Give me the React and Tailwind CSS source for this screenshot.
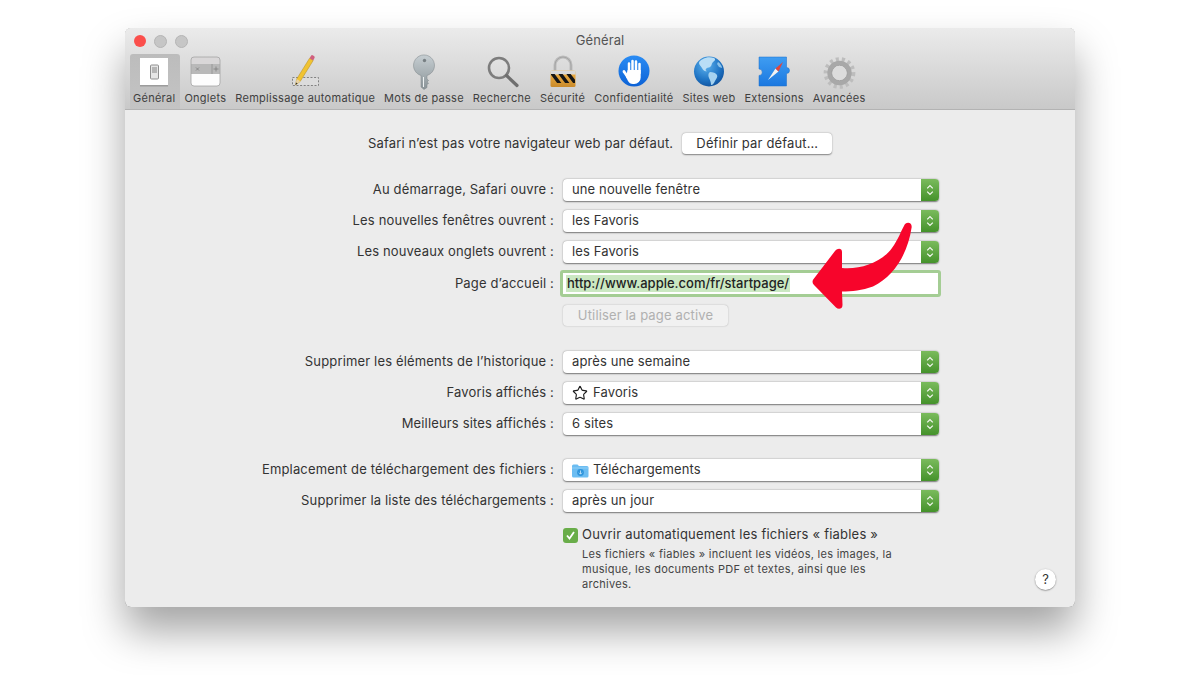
import React from "react";
import { Star } from "lucide-react";

const Svg = ({ children }) => (
  <svg width="40" height="36" viewBox="0 0 40 36" className="block">{children}</svg>
);

const icons = {
  general: (
    <Svg>
      <rect x="6" y="4" width="28" height="28" fill="#ffffff" />
      <rect x="6" y="31" width="28" height="1.5" fill="#9c9c9c" />
      <rect x="16.5" y="11" width="8" height="14" rx="1" fill="#e6e6e6" stroke="#8f8f8f" />
      <rect x="18" y="13" width="5" height="6" fill="#b5b5b5" />
    </Svg>
  ),
  tabs: (
    <Svg>
      <path d="M6 6a3 3 0 0 1 3-3h23a3 3 0 0 1 3 3v4H6z" fill="#d9d7d8" />
      <rect x="6" y="10" width="29" height="10" fill="#b9b9b9" />
      <path d="M6 20h29v9a3 3 0 0 1-3 3H9a3 3 0 0 1-3-3z" fill="#fdfdfd" />
      <path d="M6 6a3 3 0 0 1 3-3h23a3 3 0 0 1 3 3v23a3 3 0 0 1-3 3H9a3 3 0 0 1-3-3z" fill="none" stroke="#a3a3a3" strokeWidth="0.8" />
      <path d="M11 13.5l3 3M14 13.5l-3 3" stroke="#7d7d7d" strokeWidth="0.8" />
      <path d="M27 10v10" stroke="#8f8f8f" strokeWidth="0.8" />
      <path d="M31 12.5v5M28.5 15h5" stroke="#7d7d7d" strokeWidth="0.8" />
    </Svg>
  ),
  pencil: (
    <Svg>
      <rect x="7.5" y="23.5" width="26" height="8" fill="#dcdcdc" stroke="#777" strokeWidth="0.9" strokeDasharray="2 1.6" />
      <path d="M10.5 31l1.2-6L24.6 4.2l3.6 2.3L15.3 27.3z" fill="#f0c332" stroke="#b48a1b" strokeWidth="0.5" />
      <path d="M10.5 31l1.2-6 3.6 2.3z" fill="#e9d3a6" />
      <path d="M10.5 31l.5-2.5 1.6 1z" fill="#333" />
      <path d="M24.6 4.2l1.4-2.4a1.5 1.5 0 0 1 2-.4l1 .6a1.5 1.5 0 0 1 .5 2l-1.3 2.5z" fill="#d0607e" />
    </Svg>
  ),
  key: (
    <Svg>
      <defs>
        <linearGradient id="k" x1="0" y1="0" x2="0" y2="1">
          <stop offset="0" stopColor="#c6ced2" />
          <stop offset="1" stopColor="#8b9498" />
        </linearGradient>
      </defs>
      <path d="M17 21.5V33l3 2.5 3-2v-3l1.6-1.2-1.6-1.4 1.6-1.4-1.6-1.5v-3.5a10.5 10.5 0 1 0-6 0z" fill="url(#k)" stroke="#7c8589" strokeWidth="0.5" />
      <circle cx="20.5" cy="6.5" r="1.7" fill="#777f83" />
      <path d="M19.5 23v10" stroke="#eef1f2" strokeWidth="1" />
    </Svg>
  ),
  search: (
    <Svg>
      <circle cx="17" cy="14" r="10" fill="#ffffff" fillOpacity="0.12" stroke="#7d7d7d" strokeWidth="2.6" />
      <path d="M24.5 21.5L35 31.5" stroke="#6f6f6f" strokeWidth="3.2" strokeLinecap="round" />
    </Svg>
  ),
  lock: (
    <Svg>
      <defs>
        <linearGradient id="l" x1="0" y1="0" x2="0" y2="1">
          <stop offset="0" stopColor="#f4b344" />
          <stop offset="1" stopColor="#c98a2b" />
        </linearGradient>
        <clipPath id="lc"><rect x="8" y="20" width="24" height="9" /></clipPath>
      </defs>
      <path d="M12 18v-7a8 8 0 0 1 16 0v7" fill="none" stroke="#bcbcbc" strokeWidth="3" />
      <path d="M12 18v-7a8 8 0 0 1 16 0v7" fill="none" stroke="#8f8f8f" strokeWidth="0.5" />
      <rect x="7.5" y="16.5" width="25" height="16.5" rx="1.5" fill="url(#l)" />
      <rect x="7.5" y="16.5" width="25" height="4" fill="#d9d9d9" />
      <g clipPath="url(#lc)" stroke="#161616" strokeWidth="3.4">
        <path d="M8 18l9 12M16 18l9 12M24 18l9 12" />
      </g>
    </Svg>
  ),
  hand: (
    <Svg>
      <defs>
        <linearGradient id="h" x1="0" y1="0" x2="0" y2="1">
          <stop offset="0" stopColor="#2a8cf4" />
          <stop offset="1" stopColor="#0c62d6" />
        </linearGradient>
      </defs>
      <circle cx="20" cy="17" r="15.5" fill="url(#h)" />
      <g stroke="#ffffff" strokeWidth="2.5" strokeLinecap="round">
        <path d="M15 9.5V18M18.5 7V18M22 7.5V18M25.5 10V19" />
        <path d="M10 17.5l4 6" strokeWidth="2.8" />
      </g>
      <path d="M13.6 16h13.1v7.5a6.5 6.5 0 0 1-6.5 6.5h-1.2c-2.5 0-3.8-1-5-3l-2-4z" fill="#ffffff" />
    </Svg>
  ),
  globe: (
    <Svg>
      <defs>
        <radialGradient id="g" cx="0.4" cy="0.3" r="0.8">
          <stop offset="0" stopColor="#5eb3ee" />
          <stop offset="0.6" stopColor="#1f74c4" />
          <stop offset="1" stopColor="#0d4a94" />
        </radialGradient>
      </defs>
      <circle cx="20" cy="17.5" r="15" fill="url(#g)" />
      <path d="M14 5c3-2 8-2 11-1 2 1 1 3-1 4-2 2-1 4-3 5-1 1-3 0-4 2-1 1 0 2 1 2-2 1-4-1-5-3-1-2-3-3-3-5 0-2 2-3 4-4z" fill="#b9def6" />
      <path d="M21 18c3 0 6 1 7 3s-1 4-2 6-2 4-4 4c0-3-1-5-2-7-1-2-1-5 1-6z" fill="#a5d2f0" />
      <path d="M29 8c2 1 4 4 4 6l-3-1-2-3z" fill="#8cc2e8" />
    </Svg>
  ),
  ext: (
    <Svg>
      <defs>
        <linearGradient id="e" x1="0" y1="0" x2="0" y2="1">
          <stop offset="0" stopColor="#3f9df2" />
          <stop offset="1" stopColor="#1b78e0" />
        </linearGradient>
      </defs>
      <path d="M5 3h27.5v10.5a3 3 0 1 1 0 6V32H5V21.5a3.2 3.2 0 1 0 0-6.5z" fill="url(#e)" stroke="#1a6cc9" strokeWidth="0.5" />
      <path d="M14 26l7.5-11.5 3 3z" fill="#f2f2f2" />
      <path d="M29 8l-7.5 6.5 3 3z" fill="#e2453c" />
    </Svg>
  ),
  gear: (
    <Svg>
      <circle cx="20.5" cy="19" r="13.6" fill="none" stroke="#bdbdbd" strokeWidth="4.5" strokeDasharray="3 3" />
      <circle cx="20.5" cy="19" r="10" fill="none" stroke="#a8a8a8" strokeWidth="4.4" />
      <circle cx="20.5" cy="19" r="7.6" fill="none" stroke="#8a8a8a" strokeWidth="0.6" />
      <circle cx="20.5" cy="19" r="7.2" fill="#dcdcdc" />
    </Svg>
  ),
};

const tabs = [
  ["Général", "general", true],
  ["Onglets", "tabs"],
  ["Remplissage automatique", "pencil"],
  ["Mots de passe", "key"],
  ["Recherche", "search"],
  ["Sécurité", "lock"],
  ["Confidentialité", "hand"],
  ["Sites web", "globe"],
  ["Extensions", "ext"],
  ["Avancées", "gear"],
];

function Tab({ label, icon, active }) {
  return (
    <div
      className={
        "flex flex-col items-center h-[56px] " +
        (active
          ? "-ml-[3px] -mr-[5px] pl-[3px] pr-[5px] rounded-t-[3px] bg-gradient-to-b from-[#bcbcbc] to-[#c4c4c4]"
          : "")
      }
    >
      {icons[icon]}
      <span className="text-[11px] tracking-[0.27px] leading-[14px] mt-[1px] whitespace-nowrap text-[#3f3f3f]">{label}</span>
    </div>
  );
}

function Stepper() {
  return (
    <div className="w-[18px] self-stretch rounded-r-[4px] bg-gradient-to-b from-[#7abb5c] to-[#44922a] flex items-center justify-center">
      <svg width="8" height="12" viewBox="0 0 8 12" fill="none" stroke="#f2f6ef" strokeWidth="1.3">
        <path d="M1.2 4.4L4 1.6l2.8 2.8M1.2 7.6L4 10.4l2.8-2.8" />
      </svg>
    </div>
  );
}

function Label({ children }) {
  return <div className="w-[429px] text-right whitespace-nowrap text-[13px] tracking-[0.16px] text-[#333]">{children}</div>;
}

function SelectRow({ label, children }) {
  return (
    <div className="flex items-center h-[22px]">
      <Label>{label}</Label>
      <div className="ml-[9px] w-[376px] h-[22px] flex items-center bg-white rounded-[4px] shadow-[0_0.5px_1.5px_rgba(0,0,0,0.5)]">
        <div className="flex-1 flex items-center pl-[9px] text-[13px] tracking-[0.12px] text-[#333] whitespace-nowrap">{children}</div>
        <Stepper />
      </div>
    </div>
  );
}

function Folder() {
  return (
    <svg width="18" height="15" viewBox="0 0 18 15" className="mr-[4px] -ml-[1px]">
      <path d="M1 3a1.5 1.5 0 0 1 1.5-1.5h4L8 3h8a1.5 1.5 0 0 1 1.5 1.5V13a1.5 1.5 0 0 1-1.5 1.5H2.500A1.500 1.500 0 0 1 1 13z" fill="#6cbdf2" />
      <path d="M1 5h16.500" stroke="#9ad4f7" strokeWidth="0.8" />
      <circle cx="9.500" cy="9.500" r="3.400" fill="#2f95dc" />
      <path d="M9.500 7.500v3.500M8 9.700l1.500 1.500 1.500-1.500" fill="none" stroke="#cfeafb" strokeWidth="0.8" />
    </svg>
  );
}

function Arrow() {
  return (
    <svg className="absolute left-[800px] top-[215px]" width="125" height="100" viewBox="800 215 125 100">
      <path
        d="M905 224C909 221 912.500 224 911.500 228C908 252 895 276 873 286.500C862 290.500 852 291.500 842 291.500L842.500 305C842.500 309 838.500 310 836 307.500L814 285C812 283 812 280.500 814 278.500L835 251C838 247.500 842 248.500 842 252L842 268C860 270 882 262 892 248C898 240 901 231 905 224Z"
        fill="#f7052b"
      />
    </svg>
  );
}

export default function App() {
  return (
    <div className="relative w-[1200px] h-[675px] overflow-hidden bg-white font-['Inter','Liberation_Sans',sans-serif]">
      <div className="ml-[125px] pt-[28px] w-[950px] h-[607px]">
        <div className="h-[579px] flex flex-col rounded-[6px] overflow-hidden bg-[#ececec] shadow-[0_0_0.5px_rgba(0,0,0,0.5),0_24px_42px_rgba(0,0,0,0.36)]">
          <header className="h-[82px] flex-none overflow-hidden bg-gradient-to-b from-[#ebebeb] to-[#c9c9c9] border-b border-[#b3b3b3]">
            <div className="flex items-center h-[26px]">
              <div className="flex-1 flex items-center gap-[8px]">
                <span className="ml-[9px] w-[12px] h-[12px] rounded-full bg-[#fb4f4c]" />
                <span className="w-[13px] h-[13px] rounded-full bg-[#c6c6c6] border border-[#b5b5b5]" />
                <span className="w-[13px] h-[13px] rounded-full bg-[#c6c6c6] border border-[#b5b5b5]" />
              </div>
              <span className="text-[13px] tracking-[0.1px] text-[#555]">Général</span>
              <div className="flex-1" />
            </div>
            <nav className="flex gap-[9px] pl-[8px]">
              {tabs.map(([l, i, a]) => (
                <Tab key={l} label={l} icon={i} active={a} />
              ))}
            </nav>
          </header>

          <main className="flex-1 flex">
            <div className="flex-1 flex flex-col">
              <div className="flex items-center justify-start h-[21px] mt-[23px] pl-[243px]">
                <span className="text-[13px] tracking-[0.15px] text-[#333] whitespace-nowrap">Safari n’est pas votre navigateur web par défaut.</span>
                <button className="ml-[9px] w-[150px] h-[21px] rounded-[4px] bg-white text-[13px] tracking-[0.15px] text-[#333] shadow-[0_0.5px_1.5px_rgba(0,0,0,0.45)]">
                  Définir par défaut…
                </button>
              </div>

              <div className="flex flex-col gap-[9px] mt-[25px]">
                <SelectRow label="Au démarrage, Safari ouvre :">une nouvelle fenêtre</SelectRow>
                <SelectRow label="Les nouvelles fenêtres ouvrent :">les Favoris</SelectRow>
                <SelectRow label="Les nouveaux onglets ouvrent :">les Favoris</SelectRow>
              </div>

              <div className="flex items-center h-[27px] mt-[7px]">
                <Label>Page d’accueil :</Label>
                <div className="ml-[6px] w-[381px] h-[27px] p-[3px] rounded-[3px] bg-[#a4cd94]">
                  <div className="h-full bg-white flex items-center pl-[3px]">
                    <span className="bg-[#cbe8c2] text-[13px] font-medium text-[#222] leading-[17px] px-[1px] whitespace-nowrap">http://www.apple.com/fr/startpage/</span>
                  </div>
                </div>
              </div>

              <div className="ml-[438px] mt-[8px] w-[165px] h-[21px] flex items-center justify-center rounded-[4px] bg-[#f1f1f1] text-[13px] tracking-[0.15px] text-[#b0b0b0] shadow-[0_0_1.5px_rgba(0,0,0,0.3)]">
                Utiliser la page active
              </div>

              <div className="flex flex-col gap-[9px] mt-[25px]">
                <SelectRow label="Supprimer les éléments de l’historique :">après une semaine</SelectRow>
                <SelectRow label="Favoris affichés :">
                  <Star size={16} strokeWidth={1.7} color="#1c1c1c" className="mr-[5px]" />
                  Favoris
                </SelectRow>
                <SelectRow label="Meilleurs sites affichés :">6 sites</SelectRow>
              </div>

              <div className="flex flex-col gap-[9px] mt-[24px]">
                <SelectRow label="Emplacement de téléchargement des fichiers :">
                  <Folder />
                  Téléchargements
                </SelectRow>
                <SelectRow label="Supprimer la liste des téléchargements :">après un jour</SelectRow>
              </div>

              <div className="flex items-center ml-[438px] mt-[15px] h-[16px]">
                <span className="w-[15px] h-[15px] rounded-[3px] bg-[#69ad49] flex items-center justify-center">
                  <svg width="11" height="11" viewBox="0 0 11 11" fill="none" stroke="#fff" strokeWidth="1.8">
                    <path d="M2 5.500L4.500 8.500L9 2" />
                  </svg>
                </span>
                <span className="ml-[4px] text-[13px] tracking-[0.21px] text-[#333] whitespace-nowrap">Ouvrir automatiquement les fichiers « fiables »</span>
              </div>
              <p className="ml-[457px] mt-[4px] text-[11px] tracking-[0.28px] leading-[15px] text-[#444] whitespace-nowrap">
                Les fichiers « fiables » incluent les vidéos, les images, la
                <br />
                musique, les documents PDF et textes, ainsi que les
                <br />
                archives.
              </p>
            </div>
            <div className="self-end mr-[19px] mb-[17px] w-[21px] h-[21px] rounded-full bg-white flex items-center justify-center text-[13px] text-[#333] shadow-[0_0.5px_1.5px_rgba(0,0,0,0.5)]">
              ?
            </div>
          </main>
        </div>
      </div>
      <Arrow />
    </div>
  );
}
